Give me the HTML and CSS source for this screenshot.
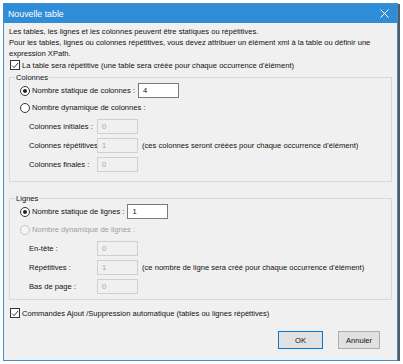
FILE: index.html
```html
<!DOCTYPE html>
<html lang="fr">
<head>
<meta charset="utf-8">
<title>Nouvelle table</title>
<link rel="stylesheet" href="styles.css">
</head>
<body>
<div class="window">
  <div class="titlebar">
    <span class="title">Nouvelle table</span>
    <svg class="close" width="9" height="9" viewBox="0 0 9 9"><path d="M0.5 0.5L8.5 8.5M8.5 0.5L0.5 8.5" stroke="#fff" stroke-width="1"/></svg>
  </div>
  <div class="content">
    <p class="intro">Les tables, les lignes et les colonnes peuvent être statiques ou répétitives.<br>Pour les tables, lignes ou colonnes répétitives, vous devez attribuer un élément xml à la table ou définir une<br>expression XPath.</p>
    <div class="check-row">
      <span class="check"><svg width="9" height="9" viewBox="0 0 9 9"><path d="M1.2 4.6L3.5 7L7.9 1.6" fill="none" stroke="#222" stroke-width="1"/></svg></span>
      <span>La table sera répétitive (une table sera créée pour chaque occurrence d'élément)</span>
    </div>

    <fieldset class="group group-cols">
      <legend>Colonnes</legend>
      <div class="row">
        <span class="radio on"></span><span class="lbl">Nombre statique de colonnes :</span><span class="field">4</span>
      </div>
      <div class="row r2">
        <span class="radio"></span><span class="lbl">Nombre dynamique de colonnes :</span>
      </div>
      <div class="row sub">
        <span class="sublbl">Colonnes initiales :</span><span class="field off">0</span>
      </div>
      <div class="row sub">
        <span class="sublbl">Colonnes répétitives</span><span class="field off">1</span><span class="note">(ces colonnes seront créées pour chaque occurrence d'élément)</span>
      </div>
      <div class="row sub">
        <span class="sublbl">Colonnes finales :</span><span class="field off">0</span>
      </div>
    </fieldset>

    <fieldset class="group group-rows">
      <legend>Lignes</legend>
      <div class="row">
        <span class="radio on"></span><span class="lbl">Nombre statique de lignes :</span><span class="field">1</span>
      </div>
      <div class="row r2 disabled">
        <span class="radio dis"></span><span class="lbl">Nombre dynamique de lignes :</span>
      </div>
      <div class="row sub">
        <span class="sublbl">En-tête :</span><span class="field off">0</span>
      </div>
      <div class="row sub">
        <span class="sublbl">Répétitives :</span><span class="field off">1</span><span class="note">(ce nombre de ligne sera créé pour chaque occurrence d'élément)</span>
      </div>
      <div class="row sub">
        <span class="sublbl">Bas de page :</span><span class="field off">0</span>
      </div>
    </fieldset>

    <div class="check-row bottom-check">
      <span class="check"><svg width="9" height="9" viewBox="0 0 9 9"><path d="M1.2 4.6L3.5 7L7.9 1.6" fill="none" stroke="#222" stroke-width="1"/></svg></span>
      <span>Commandes Ajout /Suppression automatique (tables ou lignes répéttives)</span>
    </div>

    <div class="buttons">
      <span class="btn default">OK</span>
      <span class="btn">Annuler</span>
    </div>
  </div>
</div>
</body>
</html>
```

FILE: styles.css
```css
html, body {
  margin: 0;
  padding: 0;
  background: #ffffff;
}
body {
  font-family: "Liberation Sans", Arial, sans-serif;
  font-size: 7.6px;
  color: #111;
}
.window {
  margin: 3px 0 0 3px;
  width: 395px;
  height: 358px;
  box-sizing: border-box;
  border: 1px solid #3d8fd3;
  background: #f0f0f0;
  box-shadow: 2px 1px 0 #5a5a5a;
  display: flex;
  flex-direction: column;
}
.titlebar {
  height: 19px;
  background: #2f8cd6;
  display: flex;
  align-items: center;
  justify-content: space-between;
  padding: 0 8px 0 4px;
  flex-shrink: 0;
}
.title {
  color: #fff;
  font-size: 8.8px;
}
.close {
  display: block;
}
.content {
  padding: 3px 5px 0 5px;
  display: flex;
  flex-direction: column;
}
.intro {
  margin: 0;
  line-height: 11px;
}
.check-row {
  height: 12px;
  display: flex;
  align-items: center;
  padding-left: 1px;
}
.check {
  width: 8px;
  height: 8px;
  border: 1px solid #333;
  background: #fff;
  margin-right: 2px;
  display: flex;
  align-items: center;
  justify-content: center;
}
.check svg { display: block; }
.group {
  margin: 1px 0 0 0;
  padding: 0 10px 9px 10px;
  border: 1px solid #d9d9d9;
  min-width: 0;
}
.group legend {
  padding: 0 1px;
  margin-left: -5px;
  line-height: 11px;
}
.group-rows {
  margin-top: 11px;
  padding-bottom: 5px;
}
.row {
  height: 15px;
  display: flex;
  align-items: center;
  white-space: nowrap;
}
.row.r2 { margin-top: 2px; }
.group-rows .row.r2 { margin-top: 3px; }
.row.sub {
  margin-top: 4px;
  padding-left: 9px;
}
.radio {
  width: 8px;
  height: 8px;
  border: 1px solid #333;
  border-radius: 50%;
  background: #fff;
  margin-right: 2px;
  position: relative;
  box-sizing: content-box;
}
.radio.on::after {
  content: "";
  position: absolute;
  left: 2px;
  top: 2px;
  width: 4px;
  height: 4px;
  border-radius: 50%;
  background: #222;
}
.radio.dis {
  border-color: #c4c4c4;
  background: #f5f5f5;
}
.disabled .lbl { color: #9e9e9e; }
.sublbl {
  width: 68px;
  flex-shrink: 0;
  white-space: nowrap;
  overflow: visible;
}
.field {
  width: 41px;
  height: 15px;
  box-sizing: border-box;
  border: 1px solid #7a7a7a;
  background: #fff;
  margin-left: 3px;
  padding-left: 4px;
  display: flex;
  align-items: center;
}
.field.off {
  margin-left: 0;
  border-color: #cfcfcf;
  background: #f0f0f0;
  color: #a5a5a5;
}
.note {
  margin-left: 4px;
}
.bottom-check {
  margin-top: 7px;
}
.buttons {
  margin-top: 12px;
  display: flex;
  justify-content: flex-end;
  gap: 15px;
  padding-right: 12px;
}
.btn {
  width: 45px;
  height: 18px;
  box-sizing: border-box;
  border: 1px solid #adadad;
  background: #e1e1e1;
  display: flex;
  align-items: center;
  justify-content: center;
}
.btn + .btn { width: 42px; }
.btn.default {
  border-color: #0078d7;
}
```
